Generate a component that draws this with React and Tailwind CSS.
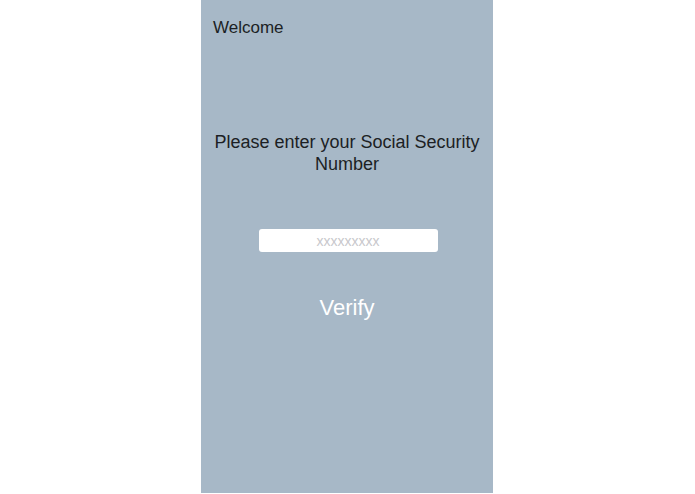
export default function App() {
    return (
        <div className="w-[695px] h-[494px] bg-white" style={{ fontFamily: '"Liberation Sans", Arial, sans-serif' }}>
            <div className="ml-[201px] w-[292px] h-[493px] bg-[#a7b8c7] flex flex-col">
                <div className="pl-[12px] pt-[18px] text-[17px] leading-[20px] text-[#1c1f24]">Welcome</div>

                <p className="mt-[93px] px-1 text-center text-[18px] leading-[22px] text-[#1c1f24]">
                    Please enter your Social Security Number
                </p>

                <div className="mt-[54px] flex justify-center">
                    <input
                        type="text"
                        placeholder="xxxxxxxxx"
                        className="ml-[2px] w-[179px] h-[23px] rounded-[3px] bg-white text-center text-[14px] text-[#444] placeholder:text-[#c8c8cc] outline-none"
                    />
                </div>

                <div className="mt-[43px] flex justify-center">
                    <button className="text-[22px] leading-[26px] text-white">Verify</button>
                </div>
            </div>
        </div>
    );
}
